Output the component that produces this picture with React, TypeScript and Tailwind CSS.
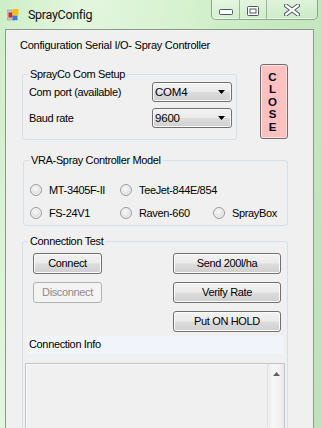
import React from "react";

const btn =
  "flex items-center justify-center h-[21px] rounded-[3px] border border-[#707070] bg-[linear-gradient(to_bottom,#f2f2f2_0%,#ebebeb_48%,#dddddd_52%,#cfcfcf_100%)] shadow-[inset_0_0_0_1px_#fbfbfb] leading-[13px]";

function Combo({ value }: { value: string }) {
  return (
    <div className="w-[80px] h-[20px] rounded-[3px] border border-[#707070] bg-[linear-gradient(to_bottom,#f2f2f2_0%,#ebebeb_48%,#dddddd_52%,#cfcfcf_100%)] shadow-[inset_0_0_0_1px_#fbfbfb] flex items-center pl-[2px] pr-[6px]">
      <span className="flex-1 text-[11.5px] tracking-[-0.2px] leading-[14px]">{value}</span>
      <svg width="7" height="4" viewBox="0 0 7 4">
        <path d="M0 0H7L3.5 4Z" fill="#000" />
      </svg>
    </div>
  );
}

function Radio({ label }: { label: string }) {
  return (
    <div className="flex items-center h-[16px] whitespace-nowrap">
      <span className="shrink-0 w-[12px] h-[12px] rounded-full border border-[#9c9c9c] bg-[radial-gradient(circle_at_45%_40%,#fafafa_0%,#e6e6e6_45%,#d0d0d0_100%)] shadow-[inset_0_0_0_1px_#f4f4f4]" />
      <span className="ml-[7px] leading-[16px] whitespace-nowrap">{label}</span>
    </div>
  );
}

export default function App() {
  return (
    <div className="w-[321px] h-[428px] overflow-hidden flex flex-col bg-[linear-gradient(100deg,#cdeec6_0%,#e3f6df_20%,#d7f2d0_45%,#c6eabf_70%,#bfe2bd_100%)] font-['Liberation_Sans',Arial,sans-serif] text-[11px] tracking-[-0.35px] text-black">
      {/* Title bar */}
      <div className="h-[29px] shrink-0 flex items-start">
        <svg className="ml-[7px] mt-[9px]" width="12" height="12" viewBox="0 0 12 12">
          <rect x="0" y="1" width="7" height="10" fill="#c4c4c4" stroke="#9a9a9a" strokeWidth="0.6" />
          <rect x="1.5" y="3.5" width="3.8" height="5" fill="#d42a1c" />
          <rect x="5.5" y="0" width="6" height="6.2" fill="#f4c20d" />
          <rect x="5.5" y="6.6" width="5" height="4.6" fill="#3a7bd5" />
        </svg>
        <span className="ml-[9px] mt-[7px] leading-[16px] text-[12.5px] font-['Roboto',Arial,sans-serif] tracking-[-0.3px] text-[#111]">
          SprayConfig
        </span>
        <div className="ml-auto mr-[3px] w-[107px] h-[20px] flex rounded-b-[5px] border border-t-0 border-[rgba(50,70,50,0.45)] bg-[linear-gradient(to_bottom,rgba(255,255,255,0.45),rgba(255,255,255,0.12))] shadow-[inset_0_-1px_0_rgba(255,255,255,0.55)] overflow-hidden">
          <div className="w-[28px] h-full flex justify-center border-r border-[rgba(50,70,50,0.35)]">
            <svg className="mt-[9px]" width="14" height="6" viewBox="0 0 14 6">
              <rect x="0.5" y="0.5" width="13" height="5" rx="1" fill="#ffffff" stroke="#4b5866" />
            </svg>
          </div>
          <div className="w-[27px] h-full flex justify-center border-r border-[rgba(50,70,50,0.35)]">
            <svg className="mt-[6px]" width="12" height="10" viewBox="0 0 12 10">
              <rect x="0.5" y="0.5" width="11" height="9" rx="1" fill="#ffffff" stroke="#4b5866" />
              <rect x="3" y="3" width="6" height="4" fill="#ffffff" stroke="#4b5866" />
            </svg>
          </div>
          <div className="flex-1 h-full flex justify-center">
            <svg className="mt-[4px]" width="16" height="12" viewBox="0 0 16 12">
              <path d="M2 1.5L14 10.5M14 1.5L2 10.5" stroke="#4b5866" strokeWidth="4.2" strokeLinecap="round" />
              <path d="M2 1.5L14 10.5M14 1.5L2 10.5" stroke="#ffffff" strokeWidth="2.2" strokeLinecap="round" />
            </svg>
          </div>
        </div>
      </div>

      {/* Client area */}
      <div className="ml-[5px] w-[309px] flex-1 border border-b-0 border-[#8a9a89] bg-[#f0f0f0] flex flex-col">
        <p className="pt-[9px] pl-[14px] leading-[13px] tracking-[-0.25px]">
          Configuration Serial I/O- Spray Controller
        </p>

        <div className="pl-[16px] flex flex-col">
          {/* Row 1: Com setup + CLOSE */}
          <div className="mt-[12px] flex items-start">
            <fieldset className="mt-[4px] w-[215px] border border-[#d5dfe5] rounded-[3px] p-0 m-0">
              <legend className="ml-[5px] px-[2px] leading-[12px]">SprayCo Com Setup</legend>
              <div className="pt-[2px] pb-[11px] pl-[6px] pr-[4px] flex flex-col gap-[6px]">
                <div className="flex items-center">
                  <span className="flex-1 leading-[13px]">Com port (available)</span>
                  <Combo value="COM4" />
                </div>
                <div className="flex items-center">
                  <span className="flex-1 leading-[13px]">Baud rate</span>
                  <Combo value="9600" />
                </div>
              </div>
            </fieldset>
            <div className="ml-[23px] w-[28px] h-[75px] rounded-[3px] border border-[#707070] bg-[#ffc0c0] shadow-[inset_0_0_0_1px_#ffdede] flex flex-col items-center pt-[6px] pr-[3px] text-[11.5px] font-bold leading-[12.4px] tracking-normal text-[#0a0a1a]">
              <span className="h-[12.4px]">C</span>
              <span className="h-[12.4px]">L</span>
              <span className="h-[12.4px]">O</span>
              <span className="h-[12.4px]">S</span>
              <span className="h-[12.4px]">E</span>
            </div>
          </div>

          {/* VRA model */}
          <fieldset className="mt-[14px] ml-[1px] w-[265px] border border-[#d5dfe5] rounded-[3px] p-0 m-0">
            <legend className="ml-[5px] px-[2px] leading-[12px]">VRA-Spray Controller Model</legend>
            <div className="pt-[16px] pb-[4px] pl-[6px] grid grid-cols-[90px_93px_auto] gap-y-[7px]">
              <Radio label="MT-3405F-II" />
              <Radio label="TeeJet-844E/854" />
              <div />
              <Radio label="FS-24V1" />
              <Radio label="Raven-660" />
              <Radio label="SprayBox" />
            </div>
          </fieldset>

          {/* Connection test */}
          <fieldset className="mt-[9px] w-[266px] h-[220px] border border-[#d5dfe5] rounded-[3px] p-0 m-0">
            <legend className="ml-[5px] px-[2px] leading-[12px]">Connection Test</legend>
            <div className="pt-[6px] flex flex-col">
              <div className="flex justify-between pl-[10px] pr-[6px]">
                <div className="w-[69px] flex flex-col gap-[8px]">
                  <div className={btn}>Connect</div>
                  <div className="flex items-center justify-center h-[21px] rounded-[3px] border border-[#adb2b5] bg-[#f4f4f4] text-[#8b8b8b] leading-[13px]">
                    Disconnect
                  </div>
                </div>
                <div className="w-[108px] flex flex-col gap-[8px]">
                  <div className={btn}>Send 200l/ha</div>
                  <div className={btn}>Verify Rate</div>
                  <div className={btn}>Put ON HOLD</div>
                </div>
              </div>
              <div className="mt-[4px] ml-[4px] w-[256px] h-[18px] bg-[#f1f5fb] pl-[2px] pt-[1px] leading-[14px]">
                Connection Info
              </div>
              <div className="mt-[9px] ml-[2px] w-[260px] h-[90px] border border-[#c4c4c4] bg-[#f0f0f0] shadow-[inset_0_0_0_1px_#fbfbfb] flex">
                <div className="flex-1" />
                <div className="w-[17px] h-full border-l border-[#e2e2e2] bg-[linear-gradient(to_right,#ececec,#f7f7f7_30%,#f2f2f2_70%,#e8e8e8)] flex justify-center">
                  <svg className="mt-[8px]" width="7" height="4" viewBox="0 0 7 4">
                    <path d="M0 4H7L3.5 0Z" fill="#606060" />
                  </svg>
                </div>
              </div>
            </div>
          </fieldset>
        </div>
      </div>
    </div>
  );
}
